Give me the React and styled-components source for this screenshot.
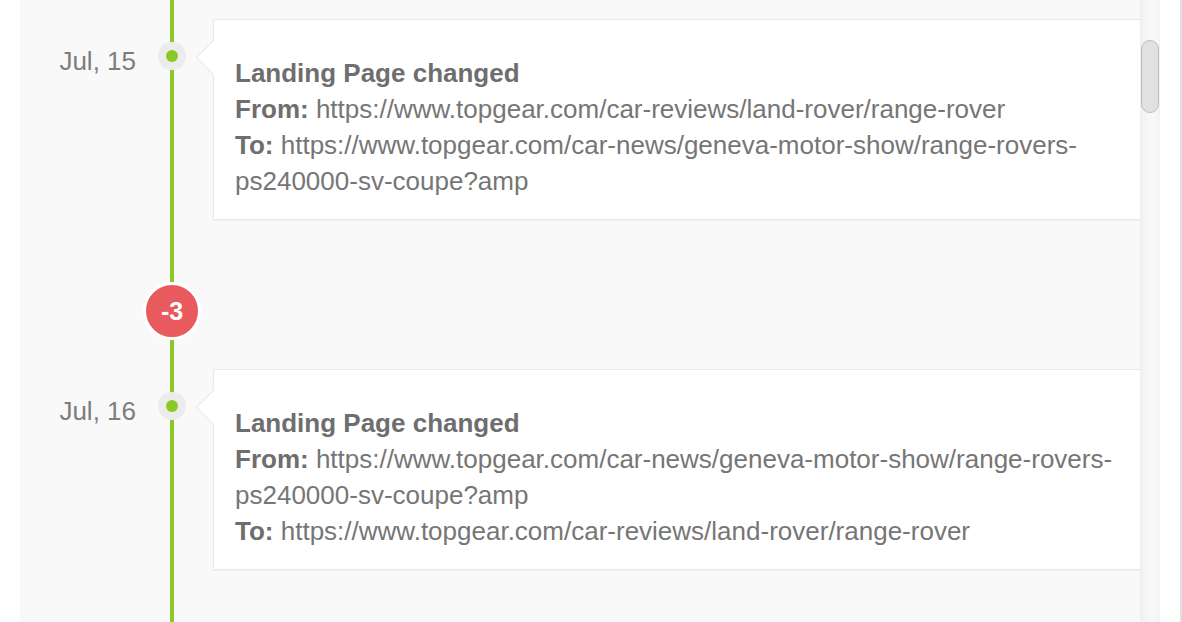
import React from "react";
import styled, { createGlobalStyle } from "styled-components";

const Global = createGlobalStyle`
  html, body { margin: 0; padding: 0; background: #fff; }
  body { font-family: "Liberation Sans", Arial, Helvetica, sans-serif; }
  * { box-sizing: border-box; }
`;

const Frame = styled.div`
  display: flex;
  height: 622px;
  padding-left: 20px;
  overflow: hidden;
`;

const Panel = styled.div`
  flex: 1;
  background: #f9f9f9;
  overflow: hidden;
  position: relative;
`;

const Timeline = styled.div`
  position: relative;
  padding-top: 19px;
  min-height: 100%;
  &::before {
    content: "";
    position: absolute;
    left: 150px;
    top: 0;
    bottom: 0;
    width: 4px;
    background: #8cc928;
  }
`;

const Item = styled.div`
  display: flex;
  align-items: flex-start;
  margin-top: ${(p) => p.$gap || 0}px;
  position: relative;
`;

const DateLabel = styled.div`
  width: 116px;
  flex: none;
  text-align: right;
  padding-top: 24px;
  font-size: 26px;
  line-height: 36px;
  color: #7d7d7d;
`;

const Rail = styled.div`
  width: 72px;
  flex: none;
  display: flex;
  justify-content: center;
  padding-top: ${(p) => p.$top || 0}px;
`;

const Dot = styled.div`
  width: 28px;
  height: 28px;
  border-radius: 50%;
  background: #ececec;
  display: flex;
  align-items: center;
  justify-content: center;
  &::after {
    content: "";
    width: 12px;
    height: 12px;
    border-radius: 50%;
    background: #8cc928;
  }
`;

const Badge = styled.div`
  width: 58px;
  height: 58px;
  border-radius: 50%;
  border: 3px solid #fff;
  background: #e95a5f;
  color: #fff;
  font-size: 25px;
  font-weight: 700;
  display: flex;
  align-items: center;
  justify-content: center;
  position: relative;
`;

const Card = styled.div`
  position: relative;
  flex: 1;
  margin-left: 5px;
  margin-right: -40px;
  background: #fff;
  border: 1px solid #e9e9e9;
  box-shadow: 0 1px 1px rgba(0, 0, 0, 0.03);
  padding: 35px 60px 20px 21px;
  font-size: 26px;
  line-height: 36px;
  color: #767676;
  &::before {
    content: "";
    position: absolute;
    left: -13px;
    top: 25px;
    width: 24px;
    height: 24px;
    background: #fff;
    border-left: 1px solid #e9e9e9;
    border-bottom: 1px solid #e9e9e9;
    transform: rotate(45deg);
  }
`;

const Title = styled.div`
  font-weight: 700;
  color: #6e6e6e;
`;

const Line = styled.div`
  word-break: normal;
`;

const Label = styled.b`
  font-weight: 700;
  color: #6e6e6e;
`;

const ScrollTrack = styled.div`
  width: 20px;
  flex: none;
  padding-top: 40px;
  background: linear-gradient(to right, #efefef, #f6f6f6 35%, #f8f8f8 70%, #f3f3f3);
`;

const Thumb = styled.div`
  margin: 0 1px;
  height: 73px;
  border-radius: 9px;
  background: #e1e1e1;
  border: 1px solid #bdbdbd;
`;

const Gutter = styled.div`
  width: 20px;
  flex: none;
  background: #fff;
`;

const EdgeLine = styled.div`
  width: 2px;
  flex: none;
  background: #e0e0e0;
`;

const events = [
  {
    date: "Jul, 15",
    from: "https://www.topgear.com/car-reviews/land-rover/range-rover",
    to: "https://www.topgear.com/car-news/geneva-motor-show/range-rovers-ps240000-sv-coupe?amp",
  },
  {
    date: "Jul, 16",
    from: "https://www.topgear.com/car-news/geneva-motor-show/range-rovers-ps240000-sv-coupe?amp",
    to: "https://www.topgear.com/car-reviews/land-rover/range-rover",
  },
];

function Event({ e, gap }) {
  return (
    <Item $gap={gap}>
      <DateLabel>{e.date}</DateLabel>
      <Rail $top={23}>
        <Dot />
      </Rail>
      <Card>
        <Title>Landing Page changed</Title>
        <Line>
          <Label>From:</Label> {e.from}
        </Line>
        <Line>
          <Label>To:</Label> {e.to}
        </Line>
      </Card>
    </Item>
  );
}

export default function App() {
  return (
    <>
      <Global />
      <Frame>
        <Panel>
          <Timeline>
            <Event e={events[0]} />
            <Item $gap={62}>
              <DateLabel />
              <Rail>
                <Badge>-3</Badge>
              </Rail>
            </Item>
            <Event e={events[1]} gap={29} />
          </Timeline>
        </Panel>
        <ScrollTrack>
          <Thumb />
        </ScrollTrack>
        <Gutter />
        <EdgeLine />
      </Frame>
    </>
  );
}
